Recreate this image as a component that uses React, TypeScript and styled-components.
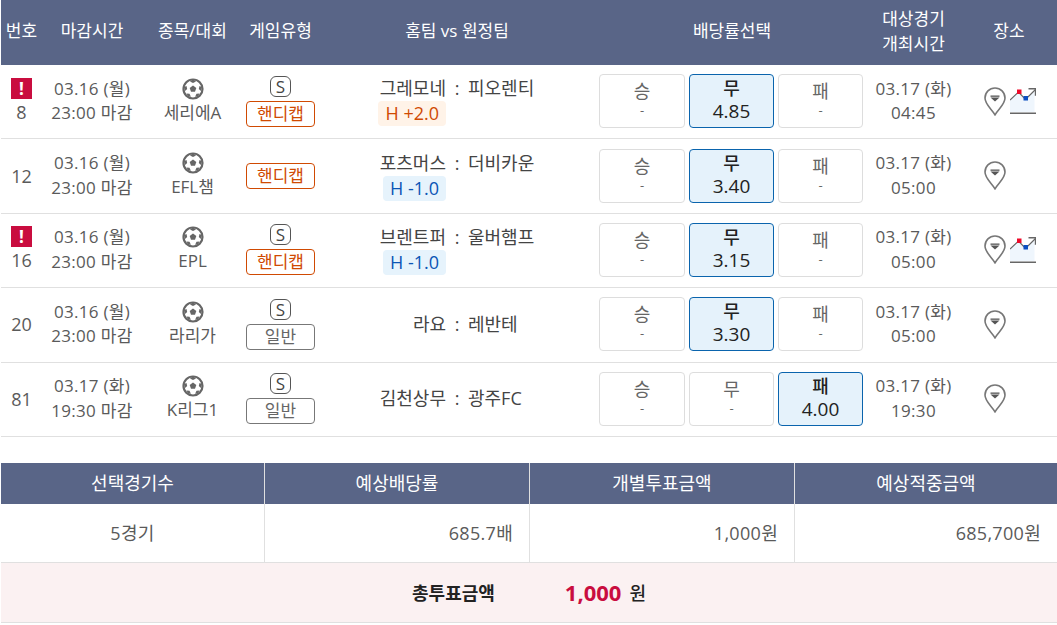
import styled, { createGlobalStyle } from "styled-components";

const GlobalStyle = createGlobalStyle`
  html, body {
    margin: 0;
    padding: 0;
    background: #fff;
  }
  body {
    font-family: "Open Sans", "Noto Sans CJK KR", sans-serif;
    color: #5a5a5a;
    overflow: hidden;
  }
`;

const COLUMNS = "41px 100px 101px 75px 278px 270px 95px 1fr";

const Page = styled.div`
  width: 1057px;
  height: 625px;
  padding-left: 1px;
  box-sizing: border-box;
`;

const HeadRow = styled.div`
  display: grid;
  grid-template-columns: ${COLUMNS};
  height: 65px;
  box-sizing: border-box;
  padding-bottom: 4px;
  background: #596587;
  color: #fff;
  font-size: 17px;
  align-items: center;
  text-align: center;
  line-height: 25px;
`;

const OddsHead = styled.div`
  padding-left: 2px;
`;

const Row = styled.div`
  display: grid;
  grid-template-columns: ${COLUMNS};
  height: 74.4px;
  box-sizing: border-box;
  padding-bottom: 1px;
  border-bottom: 1px solid #e0e0e0;
  align-items: center;
  text-align: center;
  font-size: 17px;
  line-height: 24.5px;
`;

const Cell = styled.div`
  display: flex;
  flex-direction: column;
  align-items: center;
  justify-content: center;
`;

const TimeLine = styled.span`
  letter-spacing: 0.3px;
`;

const Alert = styled.span`
  display: flex;
  align-items: center;
  justify-content: center;
  width: 21px;
  height: 21px;
  background: #c90d3f;
  color: #fff;
  font-size: 17px;
  font-weight: 700;
  line-height: 21px;
`;

const NumberText = styled.span`
  font-size: 18px;
  line-height: 26px;
`;

const League = styled.span`
  font-size: 17px;
  line-height: 25px;
`;

const Ball = styled.svg`
  width: 22px;
  height: 22px;
  display: block;
`;

const GameBox = styled.span`
  display: block;
  width: 19px;
  height: 19px;
  border: 1px solid #555;
  border-radius: 6px;
  font-size: 17px;
  line-height: 19px;
  color: #444;
  margin-bottom: 4px;
`;

const TypeTag = styled.span<{ $kind: "handicap" | "normal" }>`
  display: block;
  width: 67px;
  height: 24px;
  border: 1px solid ${(p) => (p.$kind === "handicap" ? "#d04a02" : "#777")};
  border-radius: 4px;
  color: ${(p) => (p.$kind === "handicap" ? "#d04a02" : "#666")};
  font-size: 17px;
  line-height: 24px;
`;

const Teams = styled.div`
  display: grid;
  grid-template-columns: 1fr 22px 1fr;
  width: 278px;
  font-size: 18px;
  line-height: 25px;
  color: #444;
`;

const Home = styled.div`
  display: flex;
  flex-direction: column;
  align-items: flex-end;
`;

const Away = styled.div`
  text-align: left;
`;

const Handi = styled.span<{ $plus: boolean }>`
  display: block;
  height: 25px;
  padding: 0 7px;
  border-radius: 4px;
  font-size: 18px;
  line-height: 25px;
  background: ${(p) => (p.$plus ? "#fff3e8" : "#e6f3fc")};
  color: ${(p) => (p.$plus ? "#d04a02" : "#0b55b5")};
`;

const Odds = styled.div`
  display: grid;
  grid-template-columns: 86px 85px 85px;
  column-gap: 4px;
  justify-content: center;
`;

const OddsButton = styled.button<{ $on: boolean }>`
  height: 54px;
  padding: 0 0 2px;
  box-sizing: border-box;
  border: 1px solid ${(p) => (p.$on ? "#0a64ad" : "#ddd")};
  border-radius: 4px;
  background: ${(p) => (p.$on ? "#e5f2fb" : "#fff")};
  color: ${(p) => (p.$on ? "#222" : "#666")};
  font-family: inherit;
  font-size: 18px;
`;

const OddsLabel = styled.span<{ $on: boolean }>`
  display: block;
  font-weight: ${(p) => (p.$on ? 500 : 400)};
  line-height: ${(p) => (p.$on ? "23px" : "21px")};
`;

const OddsValue = styled.span<{ $on: boolean }>`
  display: block;
  font-size: ${(p) => (p.$on ? "19px" : "13px")};
  line-height: ${(p) => (p.$on ? "23px" : "17px")};
`;

const Venue = styled.div`
  display: flex;
  align-items: center;
  padding-left: 23px;
  gap: 4px;
`;

const Gap = styled.div`
  height: 26px;
`;

const SummaryGrid = styled.div`
  display: grid;
  grid-template-columns: 264px 265px 265px 1fr;
`;

const SummaryHead = styled.div<{ $last?: boolean }>`
  height: 41px;
  background: #596587;
  color: #fff;
  font-size: 18px;
  line-height: 41px;
  text-align: center;
  box-sizing: border-box;
  border-right: ${(p) => (p.$last ? "none" : "1px solid #e0e0e0")};
`;

const SummaryValue = styled.div<{ $center?: boolean; $last?: boolean }>`
  height: 59px;
  box-sizing: border-box;
  padding: 0 16px;
  font-size: 18px;
  line-height: 58px;
  letter-spacing: 0.3px;
  text-align: ${(p) => (p.$center ? "center" : "right")};
  border-right: ${(p) => (p.$last ? "none" : "1px solid #e0e0e0")};
  border-bottom: 1px solid #e0e0e0;
`;

const TotalBar = styled.div`
  height: 60px;
  box-sizing: border-box;
  display: flex;
  align-items: center;
  justify-content: center;
  background: #fbf1f2;
  border-bottom: 1px solid #e0e0e0;
  color: #222;
  font-size: 18px;
  font-weight: 700;
`;

const TotalLabel = styled.span`
  margin-right: 70px;
`;

const TotalAmount = styled.span`
  color: #c90d3f;
  font-size: 22px;
  margin-right: 8px;
`;

const TotalUnit = styled.span`
  font-weight: 500;
`;

function SoccerBall() {
  return (
    <Ball viewBox="0 0 22 22">
      <circle cx="11" cy="11" r="9.5" fill="#fff" stroke="#666" strokeWidth="2.2" />
      <polygon points="11,7.5 14.3,10 13,13.8 9,13.8 7.7,10" fill="#666" />
      <path d="M11 1.5l3 2-3 1.4-3-1.400zM20 9l-1 4-2.200-2 .7-3zM2 9l1 4 2.200-2-.7-3zM6 18.500l-1.500-3 3 .2 1.400 3zM16 18.500l1.500-3-3 .2-1.400 3z" fill="#666" />
    </Ball>
  );
}

function Pin() {
  return (
    <svg width="22" height="29" viewBox="0 0 22 29" style={{ display: "block" }}>
      <path d="M11 27.800C8 22.300 1 17.500 1 11a10 10 0 0 1 20 0c0 6.500-7 11.300-10 16.800z" fill="#fff" stroke="#777" strokeWidth="1.600" />
      <path d="M6.500 10.500h9L11 14.500z" fill="#555" />
      <rect x="6.500" y="8.500" width="9" height="1.300" fill="#555" />
    </svg>
  );
}

function TrendChart() {
  return (
    <svg width="26" height="26" viewBox="0 0 26 26" style={{ display: "block" }}>
      <path d="M0 12l8.500-8 7 7.500 9-9V24H0z" fill="#eff6fd" />
      <path d="M0 12l8.500-8 7 7.500 10-10" fill="none" stroke="#666" strokeWidth="1.200" />
      <path d="M18.500.700h7v7" fill="none" stroke="#666" strokeWidth="1.400" />
      <rect x="7" y="1.500" width="4.500" height="4.500" fill="#ee0a2a" />
      <rect x="13.500" y="8" width="4.500" height="4.500" fill="#0b4fc2" />
      <rect x="0" y="24.500" width="26" height="1.500" fill="#666" />
    </svg>
  );
}

type Pick = "승" | "무" | "패";

interface IGame {
  no: number;
  alert?: boolean;
  close: [string, string];
  league: string;
  special?: boolean;
  handicap?: boolean;
  home: string;
  away: string;
  handi?: string;
  pick: Pick;
  odd: string;
  start: [string, string];
  chart?: boolean;
}

const games: IGame[] = [
  { no: 8, alert: true, close: ["03.16 (월)", "23:00 마감"], league: "세리에A", special: true, handicap: true, home: "그레모네", away: "피오렌티", handi: "H +2.0", pick: "무", odd: "4.85", start: ["03.17 (화)", "04:45"], chart: true },
  { no: 12, close: ["03.16 (월)", "23:00 마감"], league: "EFL챔", handicap: true, home: "포츠머스", away: "더비카운", handi: "H -1.0", pick: "무", odd: "3.40", start: ["03.17 (화)", "05:00"] },
  { no: 16, alert: true, close: ["03.16 (월)", "23:00 마감"], league: "EPL", special: true, handicap: true, home: "브렌트퍼", away: "울버햄프", handi: "H -1.0", pick: "무", odd: "3.15", start: ["03.17 (화)", "05:00"], chart: true },
  { no: 20, close: ["03.16 (월)", "23:00 마감"], league: "라리가", special: true, home: "라요", away: "레반테", pick: "무", odd: "3.30", start: ["03.17 (화)", "05:00"] },
  { no: 81, close: ["03.17 (화)", "19:30 마감"], league: "K리그1", special: true, home: "김천상무", away: "광주FC", pick: "패", odd: "4.00", start: ["03.17 (화)", "19:30"] },
];

const picks: Pick[] = ["승", "무", "패"];

function App() {
  return (
    <Page>
      <GlobalStyle />
      <HeadRow>
        <div>번호</div>
        <div>마감시간</div>
        <div>종목/대회</div>
        <div>게임유형</div>
        <div>홈팀 vs 원정팀</div>
        <OddsHead>배당률선택</OddsHead>
        <div>
          대상경기
          <br />
          개최시간
        </div>
        <div>장소</div>
      </HeadRow>
      {games.map((game) => (
        <Row key={game.no}>
          <Cell>
            {game.alert && <Alert>!</Alert>}
            <NumberText>{game.no}</NumberText>
          </Cell>
          <Cell>
            <TimeLine>{game.close[0]}</TimeLine>
            <TimeLine>{game.close[1]}</TimeLine>
          </Cell>
          <Cell>
            <SoccerBall />
            <League>{game.league}</League>
          </Cell>
          <Cell>
            {game.special && <GameBox>S</GameBox>}
            <TypeTag $kind={game.handicap ? "handicap" : "normal"}>
              {game.handicap ? "핸디캡" : "일반"}
            </TypeTag>
          </Cell>
          <Cell>
            <Teams>
              <Home>
                <span>{game.home}</span>
                {game.handi && (
                  <Handi $plus={game.handi.includes("+")}>{game.handi}</Handi>
                )}
              </Home>
              <span>:</span>
              <Away>{game.away}</Away>
            </Teams>
          </Cell>
          <Odds>
            {picks.map((p) => (
              <OddsButton key={p} $on={p === game.pick}>
                <OddsLabel $on={p === game.pick}>{p}</OddsLabel>
                <OddsValue $on={p === game.pick}>
                  {p === game.pick ? game.odd : "-"}
                </OddsValue>
              </OddsButton>
            ))}
          </Odds>
          <Cell>
            <TimeLine>{game.start[0]}</TimeLine>
            <TimeLine>{game.start[1]}</TimeLine>
          </Cell>
          <Venue>
            <Pin />
            {game.chart && <TrendChart />}
          </Venue>
        </Row>
      ))}
      <Gap />
      <SummaryGrid>
        <SummaryHead>선택경기수</SummaryHead>
        <SummaryHead>예상배당률</SummaryHead>
        <SummaryHead>개별투표금액</SummaryHead>
        <SummaryHead $last>예상적중금액</SummaryHead>
        <SummaryValue $center>5경기</SummaryValue>
        <SummaryValue>685.7배</SummaryValue>
        <SummaryValue>1,000원</SummaryValue>
        <SummaryValue $last>685,700원</SummaryValue>
      </SummaryGrid>
      <TotalBar>
        <TotalLabel>총투표금액</TotalLabel>
        <TotalAmount>1,000</TotalAmount>
        <TotalUnit>원</TotalUnit>
      </TotalBar>
    </Page>
  );
}

export default App;
